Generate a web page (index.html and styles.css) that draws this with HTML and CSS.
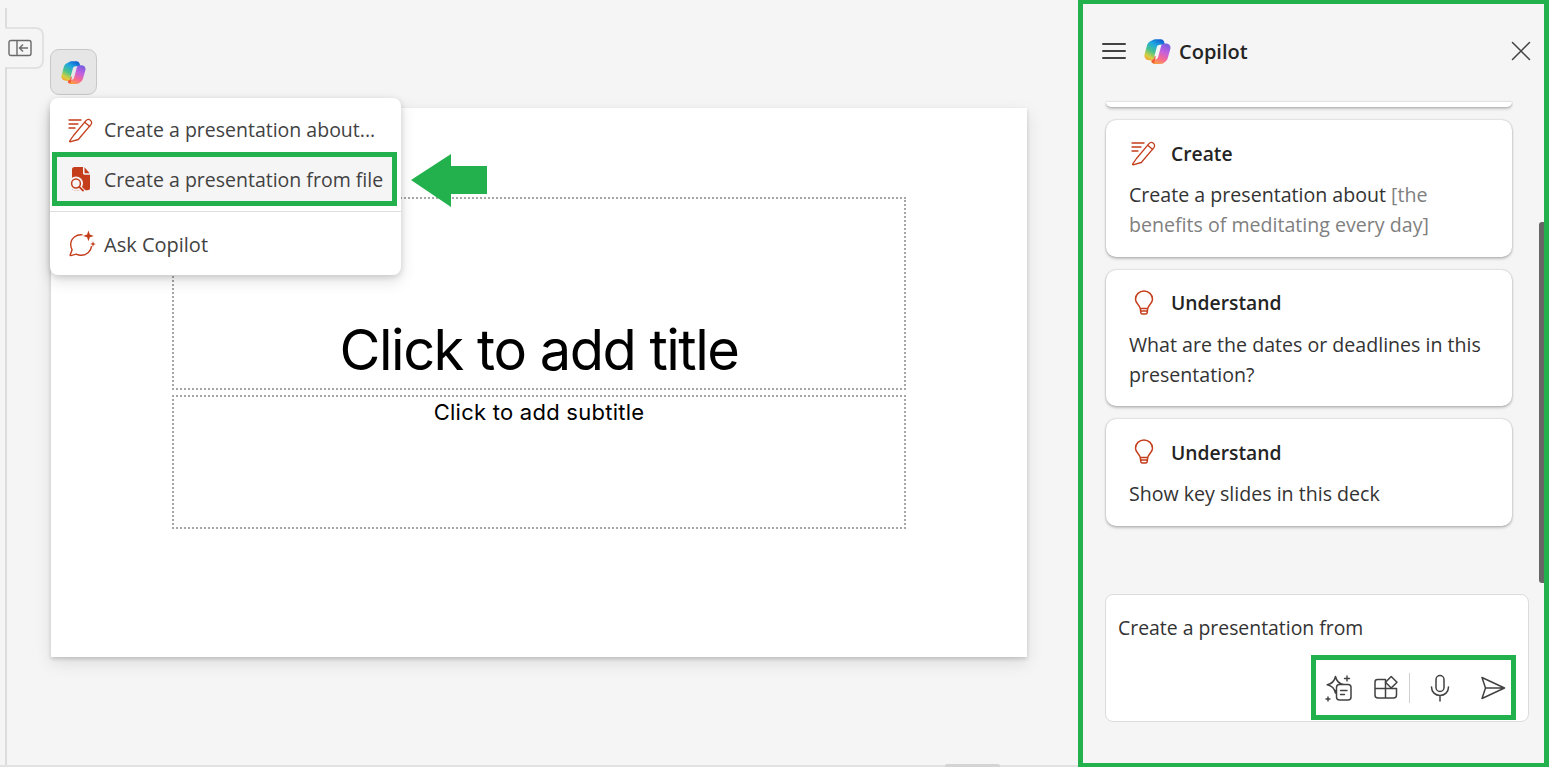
FILE: index.html
```html
<!DOCTYPE html>
<html lang="en">
<head>
<meta charset="utf-8">
<title>Copilot in PowerPoint</title>
<link rel="stylesheet" href="styles.css">
</head>
<body>
<svg class="defs" width="0" height="0" aria-hidden="true">
  <defs>
    <linearGradient id="ribL" x1="0.75" y1="0" x2="0.2" y2="1">
      <stop offset="0" stop-color="#0f5fd0"/><stop offset="0.3" stop-color="#1fa8e0"/><stop offset="0.6" stop-color="#4cc38a"/><stop offset="0.85" stop-color="#d8d040"/><stop offset="1" stop-color="#f5a030"/>
    </linearGradient>
    <linearGradient id="ribR" x1="0.7" y1="0" x2="0.3" y2="1">
      <stop offset="0" stop-color="#7a5fe0"/><stop offset="0.35" stop-color="#c060e0"/><stop offset="0.7" stop-color="#f86a90"/><stop offset="1" stop-color="#fca040"/>
    </linearGradient>
    <symbol id="copilot" viewBox="0 0 26 24">
      <path fill="url(#ribL)" d="M8.200 1.200C9 .5 10 .2 11 .2h5.300c1.200 0 2.400.8 2.800 2l1.200 3.400h-5.100c-1.400 0-2.500.9-2.900 2.200L9.500 18.600c-.3 1-1 1.800-1.800 2.200L4 20.300c-1.100-.1-2-.7-2.600-1.500C.5 17.700.2 16.300.5 15l2.300-8.600C3.300 4 5 2.500 8.200 1.200z"/>
      <path fill="url(#ribR)" d="M17.500 23.700c.8-.1 1.700-.6 2.200-1.300 1.500-.8 2.800-2.300 3.300-4.300l2.400-8.800c.3-1.300 0-2.500-.8-3.500-.7-.8-1.600-1.300-2.700-1.400l-3.400.2c-1 .3-1.700 1.100-2 2.100l-2.900 10.700c-.4 1.400-1.600 2.300-3 2.300H7l1.500 2.900c.5 1 1.500 1.700 2.600 1.700z"/>
      <path fill="#f0542c" opacity=".9" d="M7.700 20.800c.9-.4 1.500-1.200 1.800-2.200l.6-2.100h1.300l-1.600 7h-.9c-.9-.3-1.600-.9-2-1.700z"/>
    </symbol>
    <symbol id="pen" viewBox="0 0 26 26" fill="none" stroke="currentColor" stroke-width="1.300" stroke-linejoin="round" stroke-linecap="round">
      <path d="M1 3h12M1 7h9M1 11h6"/>
      <path d="M5.500 18.500 18 3.700c1.100-1.300 3-1.500 4.400-.4s1.600 3 .5 4.300L10.300 22.500 2 24.800c-.4-.1-.5-.4-.4-.6z"/>
      <path d="M16.700 5.300l5 4.200"/>
    </symbol>
    <symbol id="bulb" viewBox="0 0 20 26" fill="none" stroke="currentColor" stroke-width="1.500" stroke-linejoin="round">
      <path d="M6.300 18.500c-.3-1.800-1.400-3-2.500-4.300C2.600 12.900 1.500 11.400 1.500 9.300 1.500 4.600 5.300 1 10 1s8.500 3.600 8.500 8.300c0 2.100-1.100 3.600-2.300 4.900-1.100 1.300-2.200 2.500-2.500 4.300z"/>
      <path d="M6.300 18.500l.5 4.200c.1.800.7 1.300 1.500 1.300h3.400c.8 0 1.400-.5 1.500-1.300l.5-4.200M6.700 21h6.600"/>
    </symbol>
  </defs>
</svg>

<div class="app">
  <main class="workspace">
    <div class="rail rail-top"></div>
    <button class="pane-tab" type="button" aria-label="Collapse thumbnails">
      <svg width="24" height="18" viewBox="0 0 24 18" fill="none" stroke="#6a6a6a" stroke-width="1.400">
        <rect x="1" y="1.500" width="22" height="15" rx="2"/>
        <path d="M9 1.500v15M20 9h-8.500M15 5.500 11.500 9l3.500 3.500"/>
      </svg>
    </button>
    <div class="rail rail-bottom"></div>

    <button class="copilot-btn" type="button" aria-label="Copilot">
      <svg width="25" height="23"><use href="#copilot"/></svg>
    </button>

    <section class="slide">
      <div class="placeholder title-ph">Click to add title</div>
      <div class="placeholder sub-ph">Click to add subtitle</div>
    </section>

    <div class="menu">
      <div class="menu-item">
        <svg class="menu-icon" width="26" height="26"><use href="#pen"/></svg>
        <span>Create a presentation about...</span>
      </div>
      <div class="menu-item menu-item-active">
        <svg class="menu-icon" width="26" height="28" viewBox="0 0 26 28" fill="#c43e1c">
          <path d="M6.500 2H15v6c0 1 .7 1.800 1.800 1.800H22V23c0 1.300-1 2.300-2.300 2.300H6.500C5 25.300 4 24.300 4 23V4.500C4 3 5 2 6.500 2z"/>
          <path d="M16.500 2.300 21.700 8.300H17.300c-.5 0-.8-.3-.8-.8z"/>
          <circle cx="8" cy="18.500" r="7" fill="#f5f5f5"/>
          <path d="M11 22l5 5" fill="none" stroke="#f5f5f5" stroke-width="4.500"/>
          <circle cx="8" cy="18.500" r="4.400" fill="none" stroke="#c43e1c" stroke-width="1.500"/>
          <path d="M11.300 21.800l3.700 3.700" fill="none" stroke="#c43e1c" stroke-width="1.800" stroke-linecap="round"/>
        </svg>
        <span>Create a presentation from file</span>
      </div>
      <div class="menu-divider"></div>
      <div class="menu-item menu-item-ask">
        <svg class="menu-icon" width="28" height="28" viewBox="0 0 26 26" fill="none" stroke="#c43e1c" stroke-width="1.300">
          <path d="M13.500 4.500C8 3.700 2.500 7.500 2.500 13.500c0 2 .5 3.500 1.300 4.900L2 23.200c-.1.400.2.700.6.600l5-1.400c1.400.7 3 1.200 4.800 1.100 5.200-.2 9-3.900 9.500-8.500"/>
          <path fill="#c43e1c" stroke="none" d="M19 .5l1.300 3.700L24 5.500l-3.700 1.300L19 10.500l-1.300-3.700L14 5.500l3.700-1.300zM23.200 10.500l.7 1.900 1.900.7-1.900.7-.7 1.900-.7-1.900-1.900-.7 1.900-.7z"/>
        </svg>
        <span>Ask Copilot</span>
      </div>
    </div>

    <svg class="callout-arrow" width="76" height="53" viewBox="0 0 76 53" aria-hidden="true">
      <path fill="#22b14c" d="M0 26 40 0v12h36v28H40v13z"/>
    </svg>

    <div class="scroll-h"></div>
  </main>

  <aside class="pane">
    <header class="pane-head">
      <svg class="burger" width="24" height="18" viewBox="0 0 24 18" stroke="#424242" stroke-width="2" stroke-linecap="round"><path d="M1 2h22M1 9h22M1 16h22"/></svg>
      <svg class="pane-logo" width="27" height="25"><use href="#copilot"/></svg>
      <h1 class="pane-title">Copilot</h1>
      <svg class="close" width="20" height="20" viewBox="0 0 20 20" stroke="#424242" stroke-width="1.500" stroke-linecap="round"><path d="M1.500 1.500l17 17M18.500 1.500l-17 17"/></svg>
    </header>

    <div class="list">
      <div class="card card-cut"></div>
      <article class="card">
        <div class="card-head"><svg class="card-icon" width="26" height="26"><use href="#pen"/></svg><span>Create</span></div>
        <p>Create a presentation about <span class="hint">[the benefits of meditating every day]</span></p>
      </article>
      <article class="card">
        <div class="card-head"><svg class="card-icon" width="26" height="26"><use href="#bulb"/></svg><span>Understand</span></div>
        <p>What are the dates or deadlines in this presentation?</p>
      </article>
      <article class="card">
        <div class="card-head"><svg class="card-icon" width="26" height="26"><use href="#bulb"/></svg><span>Understand</span></div>
        <p>Show key slides in this deck</p>
      </article>
    </div>

    <div class="composer">
      <div class="composer-text">Create a presentation from</div>
      <div class="tools">
        <svg width="28" height="28" viewBox="0 0 28 28" fill="none" stroke="#424242" stroke-width="1.500" stroke-linejoin="round" stroke-linecap="round">
          <path d="M10.500 2.500c1 4.700 3.600 7.300 8.300 8.300-4.700 1-7.300 3.600-8.300 8.300-1-4.700-3.600-7.300-8.300-8.300 4.700-1 7.300-3.600 8.300-8.300z"/>
          <rect x="11.500" y="10.500" width="14.500" height="15.500" rx="3" fill="#fff"/>
          <path d="M15.500 16.500h6.500M15.500 20.500h4M22 2v5M19.500 4.500h5M3 23v4M1 25h4" stroke-width="1.400"/>
        </svg>
        <svg width="26" height="26" viewBox="0 0 26 26" fill="none" stroke="#424242" stroke-width="1.500" stroke-linejoin="round">
          <path d="M12.500 5v18H5c-1.700 0-3-1.300-3-3V7c0-1.200 1-2.500 2.500-2.500h8zM2 13.500h21.500V20c0 1.700-1.300 3-3 3h-8"/>
          <path d="M18.200 1.500 24 7.300 18.200 13 12.500 7.300z"/>
        </svg>
        <span class="tool-sep"></span>
        <svg class="tool-mic" width="26" height="28" viewBox="0 0 26 28" fill="none" stroke="#424242" stroke-width="1.500" stroke-linecap="round">
          <rect x="9" y="1.500" width="8" height="16" rx="4"/>
          <path d="M4.500 13c0 5 3.800 8.500 8.500 8.500s8.500-3.500 8.500-8.500M13 21.500V27"/>
        </svg>
        <svg class="tool-send" width="26" height="24" viewBox="0 0 26 24" fill="none" stroke="#424242" stroke-width="1.500" stroke-linejoin="round">
          <path d="M2 1.500 24.500 12 2 22.500l3.500-10.500zM5.500 12h19"/>
        </svg>
      </div>
    </div>

    <div class="pane-scroll"></div>
  </aside>
</div>
</body>
</html>
```

FILE: styles.css
```css
* { box-sizing: border-box; }
html, body { margin: 0; height: 100%; }
body {
  background: #f5f5f5;
  font-family: "Open Sans", "Noto Sans", sans-serif;
  color: #424242;
  overflow: hidden;
}
.defs { position: absolute; }
.app { display: flex; width: 1549px; height: 767px; }

/* Left: slide editing area */
.workspace {
  position: relative;
  width: 1078px;
  flex: none;
  padding: 108px 0 0 51px;
  border-bottom: 2px solid #e2e2e2;
}
.rail { position: absolute; left: 5px; width: 2px; background: #dcdcdc; }
.rail-top { top: 8px; height: 19px; }
.rail-bottom { top: 68px; bottom: 0; }
.pane-tab {
  position: absolute;
  left: 5px;
  top: 27px;
  width: 39px;
  height: 42px;
  padding: 0 0 0 3px;
  display: flex;
  align-items: center;
  background: #f5f5f5;
  border: 2px solid #e2e2e2;
  border-left: 0;
  border-radius: 0 8px 8px 0;
}
.copilot-btn {
  position: absolute;
  left: 50px;
  top: 49px;
  width: 47px;
  height: 46px;
  display: flex;
  align-items: center;
  justify-content: center;
  padding: 0;
  background: #e6e6e6;
  border: 1px solid #c8c8c8;
  border-radius: 9px;
}
.slide {
  width: 976px;
  height: 549px;
  padding: 89px 0 0 121px;
  display: flex;
  flex-direction: column;
  gap: 5px;
  background: #fff;
  box-shadow: 0 2px 4px rgba(0,0,0,.16), 0 6px 16px rgba(0,0,0,.1);
  color: #000;
}
.placeholder { width: 734px; border: 2px dotted #a6a6a6; text-align: center; }
.title-ph {
  height: 193px;
  display: flex;
  align-items: flex-end;
  justify-content: center;
  font-family: "Inter", sans-serif;
  font-size: 56px;
  letter-spacing: -1.500px;
  line-height: 64px;
  padding-bottom: 6px;
}
.sub-ph {
  height: 134px;
  font-family: "Inter", sans-serif;
  font-size: 22px;
  letter-spacing: .25px;
  line-height: 30px;
}

/* Pop-up menu */
.menu {
  position: absolute;
  left: 50px;
  top: 98px;
  width: 351px;
  height: 177px;
  padding-top: 7px;
  background: #fff;
  border-radius: 8px;
  box-shadow: 0 2px 6px rgba(0,0,0,.14), 0 6px 16px rgba(0,0,0,.12);
  font-size: 19.500px;
}
.menu-item {
  display: flex;
  align-items: center;
  gap: 10px;
  height: 49px;
  padding-left: 18px;
  white-space: nowrap;
}
.menu-item-active {
  width: 345px;
  height: 54px;
  margin-left: 2px;
  margin-top: -2px;
  padding-left: 11px;
  background: #f5f5f5;
  border: 5px solid #22b14c;
}
.menu-item-ask { gap: 8px; font-size: 20px; }
.menu-item-ask .menu-icon { margin-top: -2px; }
.menu-icon { color: #c43e1c; flex: none; }
.menu-divider { height: 1px; margin: 5px 0 8px; background: #dedede; }
.callout-arrow { position: absolute; left: 411px; top: 154px; }
.scroll-h {
  position: absolute;
  left: 945px;
  bottom: -2px;
  width: 55px;
  height: 3px;
  background: #d4d4d4;
  border-radius: 2px 2px 0 0;
}

/* Right: Copilot pane */
.pane {
  position: relative;
  flex: 1;
  display: flex;
  flex-direction: column;
  border: solid #22b14c;
  border-width: 4px 5px 4px 5px;
}
.pane-head {
  display: flex;
  align-items: center;
  height: 98px;
  padding: 0 13px 4px 19px;
  flex: none;
}
.burger { flex: none; }
.pane-logo { margin-left: 18px; flex: none; }
.pane-title {
  margin: 0 0 0 8px;
  font-size: 20px;
  font-weight: 600;
  color: #242424;
  flex: 1;
}
.list {
  height: 447px;
  margin-left: 23px;
  width: 406px;
  display: flex;
  flex-direction: column;
  gap: 13px;
  flex: none;
}
.card {
  background: #fff;
  border-radius: 10px;
  box-shadow: 0 0 2px rgba(0,0,0,.28), 0 2px 3px rgba(0,0,0,.2);
  padding: 17px 23px 0;
  flex: none;
}
.card-cut { height: 5px; padding: 0; border-radius: 0 0 10px 10px; }
.card-head {
  display: flex;
  align-items: center;
  gap: 14px;
  height: 32px;
  font-size: 19.300px;
  font-weight: 600;
  color: #242424;
}
.card-icon { color: #c43e1c; flex: none; margin-left: 2px; }
.card p { margin: 11px 0 16.500px; font-size: 19.600px; line-height: 30px; color: #333; }
.hint { color: #808080; }

.composer {
  display: flex;
  flex-direction: column;
  justify-content: space-between;
  margin: 45px 0 0 22px;
  width: 424px;
  height: 128px;
  padding: 19px 12px 1px;
  background: #fff;
  border: 1px solid #dcdcdc;
  border-radius: 8px;
  font-size: 19.400px;
  flex: none;
}
.composer-text { line-height: 28px; color: #333; }
.tools {
  align-self: flex-end;
  width: 205px;
  height: 65px;
  display: flex;
  align-items: center;
  gap: 20px;
  padding-left: 9px;
  border: 5px solid #22b14c;
}
.tool-sep { width: 1px; height: 30px; background: #d0d0d0; margin: 0 -4px 0 -10px; }
.tool-mic { margin-left: 1px; }
.tool-send { margin-left: 7px; }
.pane-scroll {
  position: absolute;
  right: 0;
  top: 218px;
  width: 5px;
  height: 361px;
  background: #666;
  border-radius: 3px 0 0 3px;
}
```
